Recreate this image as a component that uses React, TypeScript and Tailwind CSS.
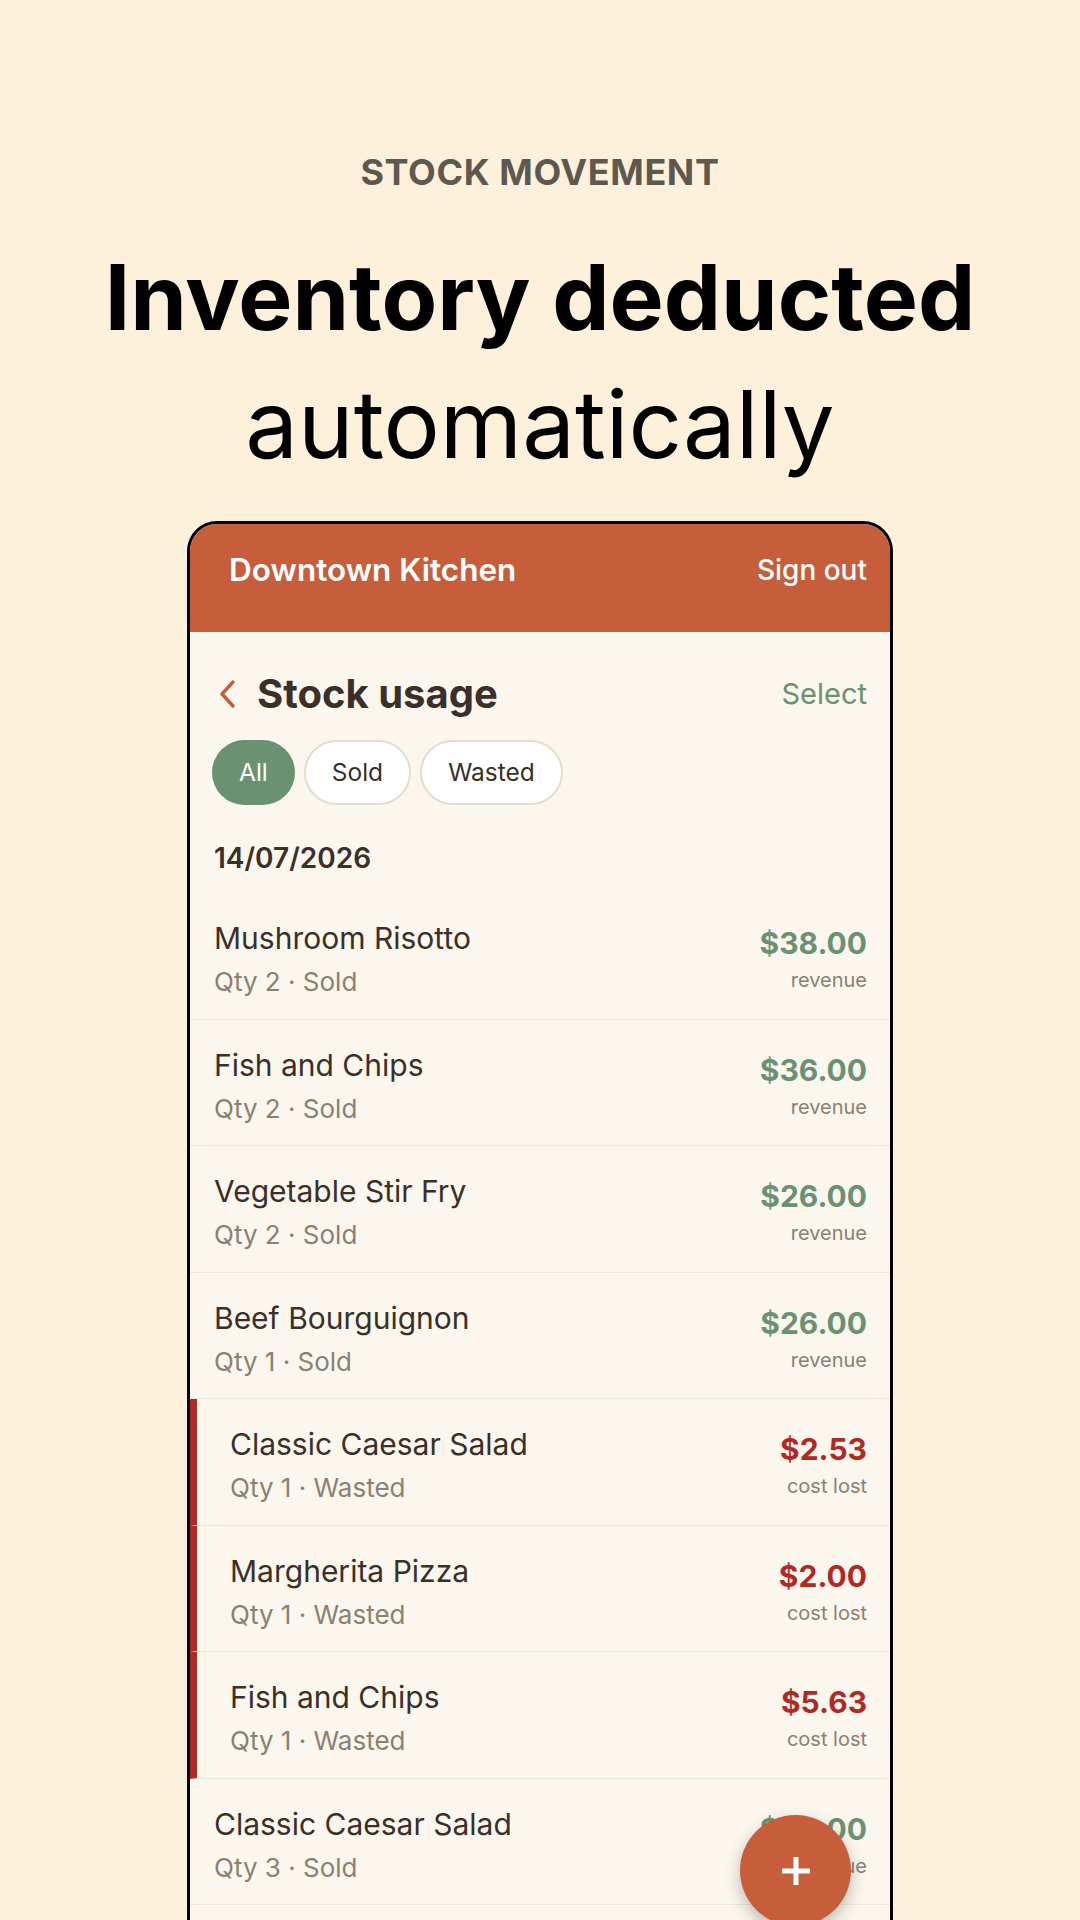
import React from "react";

type Row = { name: string; qty: number; kind: "Sold" | "Wasted"; amount: string };

const rows: Row[] = [
  { name: "Mushroom Risotto", qty: 2, kind: "Sold", amount: "$38.00" },
  { name: "Fish and Chips", qty: 2, kind: "Sold", amount: "$36.00" },
  { name: "Vegetable Stir Fry", qty: 2, kind: "Sold", amount: "$26.00" },
  { name: "Beef Bourguignon", qty: 1, kind: "Sold", amount: "$26.00" },
  { name: "Classic Caesar Salad", qty: 1, kind: "Wasted", amount: "$2.53" },
  { name: "Margherita Pizza", qty: 1, kind: "Wasted", amount: "$2.00" },
  { name: "Fish and Chips", qty: 1, kind: "Wasted", amount: "$5.63" },
  { name: "Classic Caesar Salad", qty: 3, kind: "Sold", amount: "$39.00" },
];

function ListRow({ r }: { r: Row }) {
  const wasted = r.kind === "Wasted";
  return (
    <div
      className={
        wasted
          ? "shrink-0 flex items-start justify-between border-b border-[#EFE7DA] border-l-[7px] border-l-[#B02A25] pl-[33px] pr-[23px] h-[126.5px]"
          : "shrink-0 flex items-start justify-between border-b border-[#EFE7DA] pl-[24px] pr-[23px] h-[126.5px]"
      }
    >
      <div className="flex flex-col pt-[26px]">
        <div className="text-[30px] leading-[38px] text-[#3B2F28]">{r.name}</div>
        <div className="mt-[8px] text-[26px] leading-[34px] text-[#8C8073]">
          Qty {r.qty} · {r.kind}
        </div>
      </div>
      <div className="flex flex-col items-end pt-[32px]">
        <div
          className={
            wasted
              ? "text-[30px] leading-[36px] font-bold text-[#B02A25]"
              : "text-[30px] leading-[36px] font-bold text-[#6A9272]"
          }
        >
          {r.amount}
        </div>
        <div className="mt-[7px] text-[20px] leading-[24px] text-[#8C8073]">
          {wasted ? "cost lost" : "revenue"}
        </div>
      </div>
    </div>
  );
}

export default function App() {
  return (
    <div
      className="relative w-[1080px] h-[1920px] overflow-hidden bg-[#FEF1DC] flex flex-col items-center"
      style={{ fontFamily: "Inter, 'Noto Sans', sans-serif" }}
    >
      <div className="shrink-0 mt-[150px] text-[36px] leading-[44px] font-bold text-[#5E584E] tracking-[0.6px]">
        STOCK MOVEMENT
      </div>
      <div className="shrink-0 mt-[40px] flex flex-col items-center text-black">
        <div className="text-[91px] leading-[127px] font-bold">Inventory deducted</div>
        <div className="text-[94px] leading-[127px] font-normal">automatically</div>
      </div>

      <div className="shrink-0 mt-[33px] w-[706px] rounded-t-[30px] border-[3px] border-b-0 border-black overflow-hidden bg-[#FBF6EE] flex flex-col">
        <div className="shrink-0 h-[108px] bg-[#C65D3B] flex items-start justify-between pl-[39px] pr-[23px] pt-[26px]">
          <span className="text-[31.5px] leading-[40px] font-semibold text-white">Downtown Kitchen</span>
          <span className="text-[28px] leading-[40px] font-medium text-white">Sign out</span>
        </div>

        <div className="shrink-0 flex items-center justify-between pl-[27px] pr-[23px] mt-[38px] h-[48px]">
          <div className="flex items-center gap-[20px]">
            <svg width="20" height="32" viewBox="0 0 20 32" fill="none">
              <path d="M16 4 L5 16 L16 28" stroke="#C65D3B" strokeWidth="3.4" strokeLinecap="round" strokeLinejoin="round" />
            </svg>
            <span className="text-[40px] leading-[48px] font-bold text-[#3B2F28]">Stock usage</span>
          </div>
          <span className="text-[29px] leading-[36px] text-[#6A9272]">Select</span>
        </div>

        <div className="shrink-0 flex items-center gap-[9px] pl-[22px] mt-[22px]">
          <div className="h-[65px] px-[27px] rounded-full bg-[#6A9272] text-white text-[24.5px] flex items-center">All</div>
          <div className="h-[65px] px-[26px] rounded-full bg-white border-2 border-[#E6DCC9] text-[#3B2F28] text-[24.5px] flex items-center">Sold</div>
          <div className="h-[65px] px-[26px] rounded-full bg-white border-2 border-[#E6DCC9] text-[#3B2F28] text-[24.5px] flex items-center">Wasted</div>
        </div>

        <div className="shrink-0 pl-[24px] mt-[37px] text-[28px] leading-[32px] font-semibold text-[#3B2F28]">14/07/2026</div>

        <div className="shrink-0 mt-[19px] flex flex-col">
          {rows.map((r, i) => (
            <ListRow key={i} r={r} />
          ))}
          <div className="h-[80px]" />
        </div>
      </div>

      <button className="absolute left-[740px] top-[1815px] w-[111px] h-[111px] rounded-full bg-[#C65D3B] flex items-center justify-center shadow-[0_6px_16px_rgba(0,0,0,0.25)]">
        <svg width="34" height="34" viewBox="0 0 34 34">
          <path d="M17 3 V31 M3 17 H31" stroke="white" strokeWidth="5" strokeLinecap="butt" />
        </svg>
      </button>
    </div>
  );
}
